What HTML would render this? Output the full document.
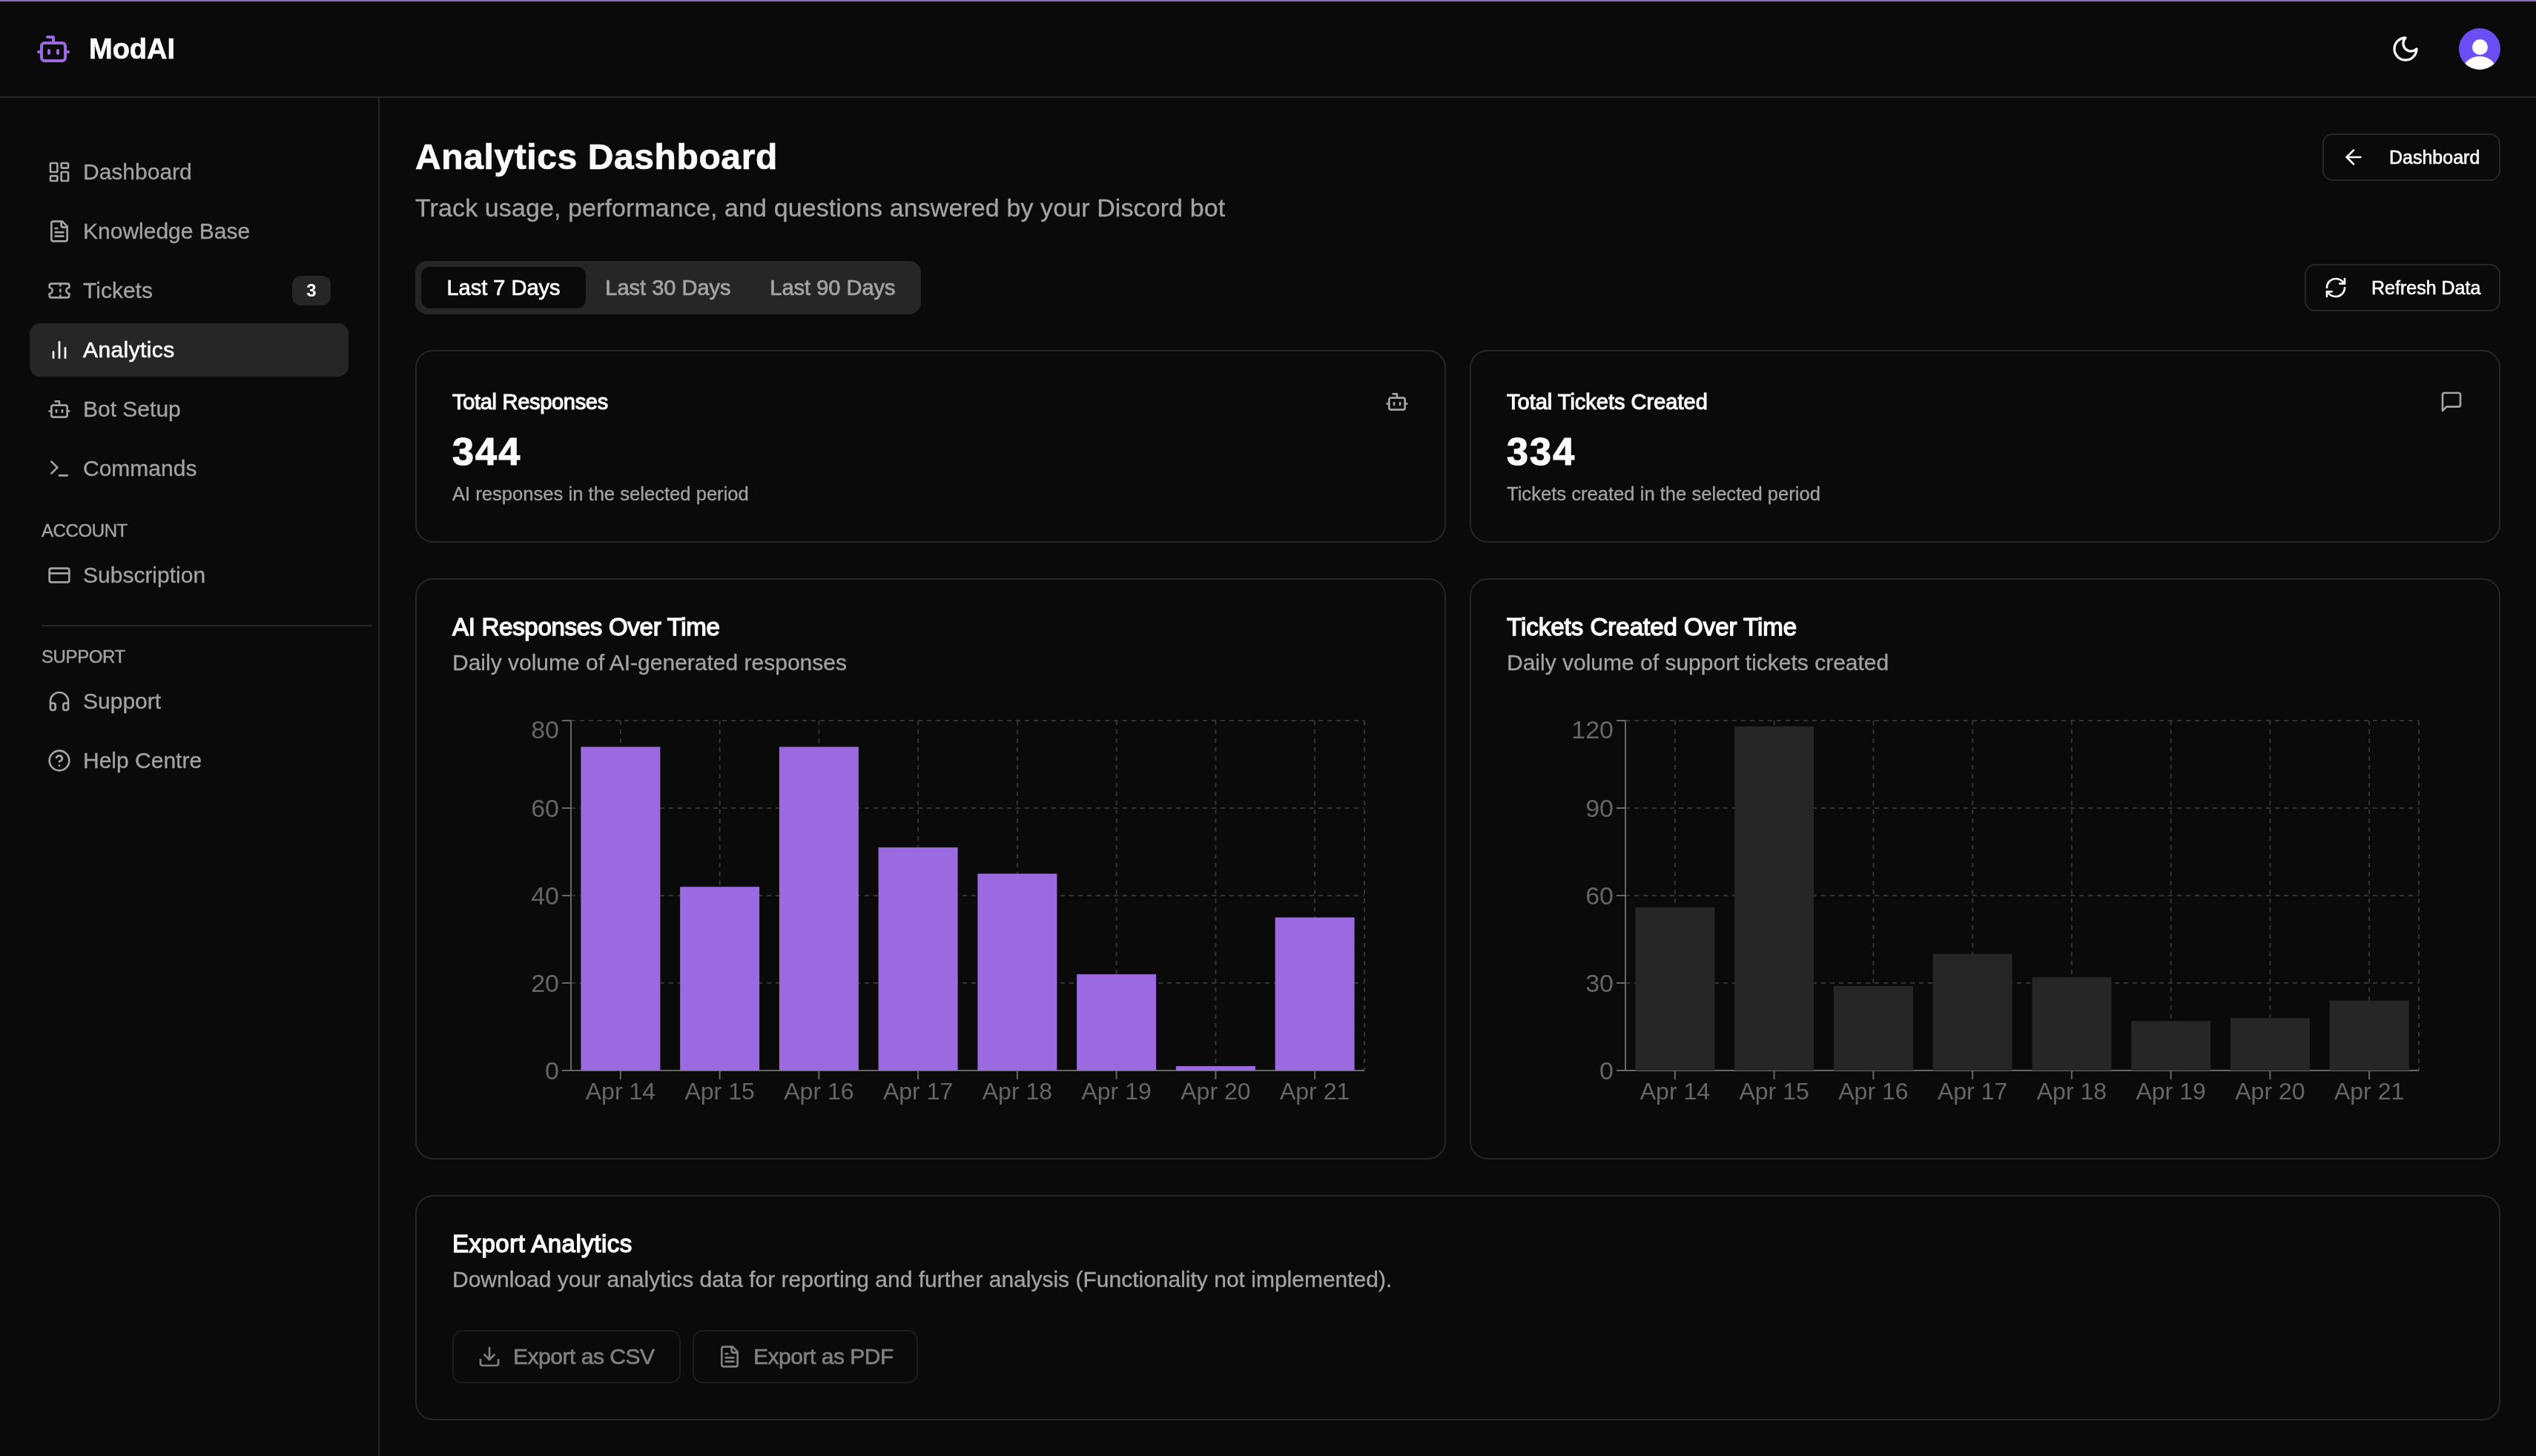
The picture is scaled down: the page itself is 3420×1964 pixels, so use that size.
<!DOCTYPE html>
<html>
<head>
<meta charset="utf-8">
<style>
*{box-sizing:border-box;margin:0;padding:0}
html,body{background:#0a0a0a;width:3420px;height:1964px;overflow:hidden}
#root{zoom:2;will-change:transform;width:1710px;height:982px;position:relative;background:#0a0a0a;color:#fafafa;font-family:"Liberation Sans",sans-serif;overflow:hidden}
@supports not (zoom:2){#root{zoom:1;transform:scale(2);transform-origin:0 0}}
.abs{position:absolute}
svg.i{position:absolute;fill:none;stroke:currentColor;stroke-width:2;stroke-linecap:round;stroke-linejoin:round}
.topline{position:absolute;left:0;top:0;width:1710px;height:1px;background:#8a6fb5}
.header{position:absolute;left:0;top:1px;width:1710px;height:65px;border-bottom:1px solid #262626}
.side{position:absolute;left:0;top:66px;width:256px;height:916px;border-right:1px solid #262626}
.nav{position:absolute;left:20px;width:215px;height:36px;border-radius:7px;color:#a3a3a3;font-size:15px}
.nav .t{position:absolute;left:36px;top:0;line-height:36px;white-space:nowrap;-webkit-text-stroke:0.15px currentColor}
.nav svg{left:12px;top:10px;width:16px;height:16px}
.nav.act{background:#262626;color:#fafafa}
.sec{position:absolute;left:28px;font-size:12px;color:#a3a3a3;-webkit-text-stroke:0.2px #a3a3a3;letter-spacing:-0.2px}
.card{position:absolute;border:1px solid #262626;border-radius:12px;background:#0a0a0a}
.btn{position:absolute;border:1px solid #262626;border-radius:7px;background:#0a0a0a;color:#fafafa;font-size:12.5px;-webkit-text-stroke:0.3px #fafafa}
.btn .t{position:absolute;white-space:nowrap}
</style>
</head>
<body>
<div id="root">
<div class="topline"></div>
<div class="header">
  <svg class="i" style="left:24px;top:20px;width:24px;height:24px;color:#9b6ae0" viewBox="0 0 24 24"><path d="M12 8V4H8"/><rect width="16" height="12" x="4" y="8" rx="2"/><path d="M2 14h2"/><path d="M20 14h2"/><path d="M15 13v2"/><path d="M9 13v2"/></svg>
  <div class="abs" style="left:60px;top:18px;font-size:19px;font-weight:bold;line-height:28px;-webkit-text-stroke:0.3px #fafafa">ModAI</div>
  <svg class="i" style="left:1612px;top:22px;width:20px;height:20px;color:#fafafa" viewBox="0 0 24 24"><path d="M12 3a6 6 0 0 0 9 9 9 9 0 1 1-9-9Z"/></svg>
  <div class="abs" style="left:1658px;top:18px;width:28px;height:28px;border-radius:50%;background:#6b4ef5;overflow:hidden">
    <div class="abs" style="left:8.75px;top:7.35px;width:10.5px;height:10.6px;border-radius:50%;background:#fff"></div>
    <div class="abs" style="left:3px;top:19.1px;width:22px;height:18px;border-radius:50%;background:#fff"></div>
  </div>
</div>
<div class="side"></div>
<!-- sidebar -->
<div class="nav" style="top:98px"><svg class="i" viewBox="0 0 24 24"><rect width="7" height="9" x="3" y="3" rx="1"/><rect width="7" height="5" x="14" y="3" rx="1"/><rect width="7" height="9" x="14" y="12" rx="1"/><rect width="7" height="5" x="3" y="16" rx="1"/></svg><span class="t">Dashboard</span></div>
<div class="nav" style="top:138px"><svg class="i" viewBox="0 0 24 24"><path d="M15 2H6a2 2 0 0 0-2 2v16a2 2 0 0 0 2 2h12a2 2 0 0 0 2-2V7Z"/><path d="M14 2v4a2 2 0 0 0 2 2h4"/><path d="M10 9H8"/><path d="M16 13H8"/><path d="M16 17H8"/></svg><span class="t">Knowledge Base</span></div>
<div class="nav" style="top:178px"><svg class="i" viewBox="0 0 24 24"><path d="M2 9a3 3 0 0 1 0 6v2a2 2 0 0 0 2 2h16a2 2 0 0 0 2-2v-2a3 3 0 0 1 0-6V7a2 2 0 0 0-2-2H4a2 2 0 0 0-2 2Z"/><path d="M13 5v2"/><path d="M13 17v2"/><path d="M13 11v2"/></svg><span class="t">Tickets</span><div class="abs" style="left:177px;top:8px;width:26px;height:20px;border-radius:6px;background:#262626;color:#fafafa;font-size:12px;font-weight:bold;text-align:center;line-height:20px">3</div></div>
<div class="nav act" style="top:218px"><svg class="i" viewBox="0 0 24 24"><line x1="18" x2="18" y1="20" y2="10"/><line x1="12" x2="12" y1="20" y2="4"/><line x1="6" x2="6" y1="20" y2="14"/></svg><span class="t" style="-webkit-text-stroke:0.3px #fafafa;letter-spacing:0.2px">Analytics</span></div>
<div class="nav" style="top:258px"><svg class="i" viewBox="0 0 24 24"><path d="M12 8V4H8"/><rect width="16" height="12" x="4" y="8" rx="2"/><path d="M2 14h2"/><path d="M20 14h2"/><path d="M15 13v2"/><path d="M9 13v2"/></svg><span class="t">Bot Setup</span></div>
<div class="nav" style="top:298px"><svg class="i" viewBox="0 0 24 24"><polyline points="4 17 10 11 4 5"/><line x1="12" x2="20" y1="19" y2="19"/></svg><span class="t">Commands</span></div>
<div class="sec" style="top:350px;line-height:16px">ACCOUNT</div>
<div class="nav" style="top:370px"><svg class="i" viewBox="0 0 24 24"><rect width="20" height="14" x="2" y="5" rx="2"/><line x1="2" x2="22" y1="10" y2="10"/></svg><span class="t">Subscription</span></div>
<div class="abs" style="left:28px;top:421.5px;width:223px;height:1px;background:#262626"></div>
<div class="sec" style="top:435px;line-height:16px">SUPPORT</div>
<div class="nav" style="top:455px"><svg class="i" viewBox="0 0 24 24"><path d="M3 14h3a2 2 0 0 1 2 2v3a2 2 0 0 1-2 2H5a2 2 0 0 1-2-2v-7a9 9 0 0 1 18 0v7a2 2 0 0 1-2 2h-1a2 2 0 0 1-2-2v-3a2 2 0 0 1 2-2h3"/></svg><span class="t">Support</span></div>
<div class="nav" style="top:495px"><svg class="i" viewBox="0 0 24 24"><circle cx="12" cy="12" r="10"/><path d="M9.09 9a3 3 0 0 1 5.83 1c0 2-3 3-3 3"/><path d="M12 17h.01"/></svg><span class="t">Help Centre</span></div>


<!-- main -->
<div class="abs" id="h1" style="left:280px;top:90px;font-size:24px;font-weight:bold;line-height:32px;white-space:nowrap;letter-spacing:0.3px;-webkit-text-stroke:0.35px #fafafa">Analytics Dashboard</div>
<div class="abs" id="sub" style="left:280px;top:128px;font-size:17px;line-height:24px;color:#a3a3a3;white-space:nowrap;-webkit-text-stroke:0.15px #a3a3a3;letter-spacing:0.05px">Track usage, performance, and questions answered by your Discord bot</div>
<div class="btn" style="left:1566px;top:90px;width:120px;height:32px"><svg class="i" style="left:12px;top:7px;width:16px;height:16px" viewBox="0 0 24 24"><path d="m12 19-7-7 7-7"/><path d="M19 12H5"/></svg><span class="t" style="left:44px;top:0;line-height:30px">Dashboard</span></div>
<div class="abs" style="left:280px;top:176px;width:341px;height:36px;border-radius:8px;background:#262626">
  <div class="abs" style="left:4px;top:4px;width:111px;height:28px;border-radius:6px;background:#0a0a0a"></div>
  <div class="abs" style="left:4px;top:4px;width:111px;line-height:28px;text-align:center;font-size:14.5px;-webkit-text-stroke:0.35px #fafafa;color:#fafafa">Last 7 Days</div>
  <div class="abs" style="left:115px;top:4px;width:111px;line-height:28px;text-align:center;font-size:14.5px;-webkit-text-stroke:0.35px #a3a3a3;color:#a3a3a3">Last 30 Days</div>
  <div class="abs" style="left:226px;top:4px;width:111px;line-height:28px;text-align:center;font-size:14.5px;-webkit-text-stroke:0.35px #a3a3a3;color:#a3a3a3">Last 90 Days</div>
</div>
<div class="btn" style="left:1554px;top:178px;width:132px;height:32px"><svg class="i" style="left:12px;top:7px;width:16px;height:16px" viewBox="0 0 24 24"><path d="M3 12a9 9 0 0 1 9-9 9.75 9.75 0 0 1 6.74 2.74L21 8"/><path d="M21 3v5h-5"/><path d="M21 12a9 9 0 0 1-9 9 9.75 9.75 0 0 1-6.74-2.74L3 16"/><path d="M8 16H3v5"/></svg><span class="t" style="left:44px;top:0;line-height:30px">Refresh Data</span></div>

<!-- stat cards -->
<div class="card" style="left:280px;top:236px;width:695px;height:130px">
  <div class="abs" style="left:24px;top:24px;font-size:14.5px;line-height:20px;-webkit-text-stroke:0.55px #fafafa;white-space:nowrap;letter-spacing:-0.15px">Total Responses</div>
  <svg class="i" style="left:653px;top:26px;width:16px;height:16px;color:#a3a3a3" viewBox="0 0 24 24"><path d="M12 8V4H8"/><rect width="16" height="12" x="4" y="8" rx="2"/><path d="M2 14h2"/><path d="M20 14h2"/><path d="M15 13v2"/><path d="M9 13v2"/></svg>
  <div class="abs" style="left:24px;top:51.5px;font-size:26px;line-height:32px;font-weight:bold;letter-spacing:1.1px;-webkit-text-stroke:0.6px #fafafa">344</div>
  <div class="abs" style="left:24px;top:88px;font-size:12.8px;line-height:16px;color:#a3a3a3;white-space:nowrap;-webkit-text-stroke:0.15px #a3a3a3">AI responses in the selected period</div>
</div>
<div class="card" style="left:991px;top:236px;width:695px;height:130px">
  <div class="abs" style="left:24px;top:24px;font-size:14.5px;line-height:20px;-webkit-text-stroke:0.55px #fafafa;white-space:nowrap">Total Tickets Created</div>
  <svg class="i" style="left:653px;top:26px;width:16px;height:16px;color:#a3a3a3" viewBox="0 0 24 24"><path d="M21 15a2 2 0 0 1-2 2H7l-4 4V5a2 2 0 0 1 2-2h14a2 2 0 0 1 2 2z"/></svg>
  <div class="abs" style="left:24px;top:51.5px;font-size:26px;line-height:32px;font-weight:bold;letter-spacing:1.1px;-webkit-text-stroke:0.6px #fafafa">334</div>
  <div class="abs" style="left:24px;top:88px;font-size:12.8px;line-height:16px;color:#a3a3a3;white-space:nowrap;-webkit-text-stroke:0.15px #a3a3a3">Tickets created in the selected period</div>
</div>

<!-- chart cards -->
<div class="card" style="left:280px;top:390px;width:695px;height:392px">
  <div class="abs" style="left:24px;top:24px;font-size:16.5px;line-height:16px;-webkit-text-stroke:0.7px #fafafa;white-space:nowrap;letter-spacing:-0.14px">AI Responses Over Time</div>
  <div class="abs" style="left:24px;top:46px;font-size:15px;line-height:20px;color:#a3a3a3;white-space:nowrap;-webkit-text-stroke:0.15px #a3a3a3">Daily volume of AI-generated responses</div>
  <svg class="abs" id="chart1" style="left:24px;top:90px;width:645px;height:276px" viewBox="0 0 645 276">
<line x1="80" x2="615" y1="241.00" y2="241.00" stroke="#333333" stroke-dasharray="3 3"/>
<line x1="80" x2="615" y1="182.00" y2="182.00" stroke="#333333" stroke-dasharray="3 3"/>
<line x1="80" x2="615" y1="123.00" y2="123.00" stroke="#333333" stroke-dasharray="3 3"/>
<line x1="80" x2="615" y1="64.00" y2="64.00" stroke="#333333" stroke-dasharray="3 3"/>
<line x1="80" x2="615" y1="5.00" y2="5.00" stroke="#333333" stroke-dasharray="3 3"/>
<line x1="113.44" x2="113.44" y1="5" y2="241" stroke="#333333" stroke-dasharray="3 3"/>
<line x1="180.31" x2="180.31" y1="5" y2="241" stroke="#333333" stroke-dasharray="3 3"/>
<line x1="247.19" x2="247.19" y1="5" y2="241" stroke="#333333" stroke-dasharray="3 3"/>
<line x1="314.06" x2="314.06" y1="5" y2="241" stroke="#333333" stroke-dasharray="3 3"/>
<line x1="380.94" x2="380.94" y1="5" y2="241" stroke="#333333" stroke-dasharray="3 3"/>
<line x1="447.81" x2="447.81" y1="5" y2="241" stroke="#333333" stroke-dasharray="3 3"/>
<line x1="514.69" x2="514.69" y1="5" y2="241" stroke="#333333" stroke-dasharray="3 3"/>
<line x1="581.56" x2="581.56" y1="5" y2="241" stroke="#333333" stroke-dasharray="3 3"/>
<line x1="615" x2="615" y1="5" y2="241" stroke="#333333" stroke-dasharray="3 3"/>
<line x1="80" x2="615" y1="241" y2="241" stroke="#666666"/>
<line x1="80" x2="80" y1="5" y2="241" stroke="#666666"/>
<line x1="74" x2="80" y1="241.00" y2="241.00" stroke="#666666"/>
<text x="72" y="241.00" dy="0.355em" text-anchor="end" fill="#666666" font-size="17">0</text>
<line x1="74" x2="80" y1="182.00" y2="182.00" stroke="#666666"/>
<text x="72" y="182.00" dy="0.355em" text-anchor="end" fill="#666666" font-size="17">20</text>
<line x1="74" x2="80" y1="123.00" y2="123.00" stroke="#666666"/>
<text x="72" y="123.00" dy="0.355em" text-anchor="end" fill="#666666" font-size="17">40</text>
<line x1="74" x2="80" y1="64.00" y2="64.00" stroke="#666666"/>
<text x="72" y="64.00" dy="0.355em" text-anchor="end" fill="#666666" font-size="17">60</text>
<line x1="74" x2="80" y1="5.00" y2="5.00" stroke="#666666"/>
<text x="72" y="11.00" dy="0.355em" text-anchor="end" fill="#666666" font-size="17">80</text>
<rect x="86.69" y="22.70" width="53.50" height="218.30" fill="#9b69e0"/>
<rect x="153.56" y="117.10" width="53.50" height="123.90" fill="#9b69e0"/>
<rect x="220.44" y="22.70" width="53.50" height="218.30" fill="#9b69e0"/>
<rect x="287.31" y="90.55" width="53.50" height="150.45" fill="#9b69e0"/>
<rect x="354.19" y="108.25" width="53.50" height="132.75" fill="#9b69e0"/>
<rect x="421.06" y="176.10" width="53.50" height="64.90" fill="#9b69e0"/>
<rect x="487.94" y="238.05" width="53.50" height="2.95" fill="#9b69e0"/>
<rect x="554.81" y="137.75" width="53.50" height="103.25" fill="#9b69e0"/>
<line x1="113.44" x2="113.44" y1="241" y2="247" stroke="#666666"/>
<text x="113.44" y="249" dy="0.71em" text-anchor="middle" fill="#666666" font-size="16">Apr 14</text>
<line x1="180.31" x2="180.31" y1="241" y2="247" stroke="#666666"/>
<text x="180.31" y="249" dy="0.71em" text-anchor="middle" fill="#666666" font-size="16">Apr 15</text>
<line x1="247.19" x2="247.19" y1="241" y2="247" stroke="#666666"/>
<text x="247.19" y="249" dy="0.71em" text-anchor="middle" fill="#666666" font-size="16">Apr 16</text>
<line x1="314.06" x2="314.06" y1="241" y2="247" stroke="#666666"/>
<text x="314.06" y="249" dy="0.71em" text-anchor="middle" fill="#666666" font-size="16">Apr 17</text>
<line x1="380.94" x2="380.94" y1="241" y2="247" stroke="#666666"/>
<text x="380.94" y="249" dy="0.71em" text-anchor="middle" fill="#666666" font-size="16">Apr 18</text>
<line x1="447.81" x2="447.81" y1="241" y2="247" stroke="#666666"/>
<text x="447.81" y="249" dy="0.71em" text-anchor="middle" fill="#666666" font-size="16">Apr 19</text>
<line x1="514.69" x2="514.69" y1="241" y2="247" stroke="#666666"/>
<text x="514.69" y="249" dy="0.71em" text-anchor="middle" fill="#666666" font-size="16">Apr 20</text>
<line x1="581.56" x2="581.56" y1="241" y2="247" stroke="#666666"/>
<text x="581.56" y="249" dy="0.71em" text-anchor="middle" fill="#666666" font-size="16">Apr 21</text>
</svg>
</div>
<div class="card" style="left:991px;top:390px;width:695px;height:392px">
  <div class="abs" style="left:24px;top:24px;font-size:16.5px;line-height:16px;-webkit-text-stroke:0.7px #fafafa;white-space:nowrap">Tickets Created Over Time</div>
  <div class="abs" style="left:24px;top:46px;font-size:15px;line-height:20px;color:#a3a3a3;white-space:nowrap;-webkit-text-stroke:0.15px #a3a3a3">Daily volume of support tickets created</div>
  <svg class="abs" id="chart2" style="left:24px;top:90px;width:645px;height:276px" viewBox="0 0 645 276">
<line x1="80" x2="615" y1="241.00" y2="241.00" stroke="#333333" stroke-dasharray="3 3"/>
<line x1="80" x2="615" y1="182.00" y2="182.00" stroke="#333333" stroke-dasharray="3 3"/>
<line x1="80" x2="615" y1="123.00" y2="123.00" stroke="#333333" stroke-dasharray="3 3"/>
<line x1="80" x2="615" y1="64.00" y2="64.00" stroke="#333333" stroke-dasharray="3 3"/>
<line x1="80" x2="615" y1="5.00" y2="5.00" stroke="#333333" stroke-dasharray="3 3"/>
<line x1="113.44" x2="113.44" y1="5" y2="241" stroke="#333333" stroke-dasharray="3 3"/>
<line x1="180.31" x2="180.31" y1="5" y2="241" stroke="#333333" stroke-dasharray="3 3"/>
<line x1="247.19" x2="247.19" y1="5" y2="241" stroke="#333333" stroke-dasharray="3 3"/>
<line x1="314.06" x2="314.06" y1="5" y2="241" stroke="#333333" stroke-dasharray="3 3"/>
<line x1="380.94" x2="380.94" y1="5" y2="241" stroke="#333333" stroke-dasharray="3 3"/>
<line x1="447.81" x2="447.81" y1="5" y2="241" stroke="#333333" stroke-dasharray="3 3"/>
<line x1="514.69" x2="514.69" y1="5" y2="241" stroke="#333333" stroke-dasharray="3 3"/>
<line x1="581.56" x2="581.56" y1="5" y2="241" stroke="#333333" stroke-dasharray="3 3"/>
<line x1="615" x2="615" y1="5" y2="241" stroke="#333333" stroke-dasharray="3 3"/>
<line x1="80" x2="615" y1="241" y2="241" stroke="#666666"/>
<line x1="80" x2="80" y1="5" y2="241" stroke="#666666"/>
<line x1="74" x2="80" y1="241.00" y2="241.00" stroke="#666666"/>
<text x="72" y="241.00" dy="0.355em" text-anchor="end" fill="#666666" font-size="17">0</text>
<line x1="74" x2="80" y1="182.00" y2="182.00" stroke="#666666"/>
<text x="72" y="182.00" dy="0.355em" text-anchor="end" fill="#666666" font-size="17">30</text>
<line x1="74" x2="80" y1="123.00" y2="123.00" stroke="#666666"/>
<text x="72" y="123.00" dy="0.355em" text-anchor="end" fill="#666666" font-size="17">60</text>
<line x1="74" x2="80" y1="64.00" y2="64.00" stroke="#666666"/>
<text x="72" y="64.00" dy="0.355em" text-anchor="end" fill="#666666" font-size="17">90</text>
<line x1="74" x2="80" y1="5.00" y2="5.00" stroke="#666666"/>
<text x="72" y="11.00" dy="0.355em" text-anchor="end" fill="#666666" font-size="17">120</text>
<rect x="86.69" y="130.87" width="53.50" height="110.13" fill="#262626"/>
<rect x="153.56" y="8.93" width="53.50" height="232.07" fill="#262626"/>
<rect x="220.44" y="183.97" width="53.50" height="57.03" fill="#262626"/>
<rect x="287.31" y="162.33" width="53.50" height="78.67" fill="#262626"/>
<rect x="354.19" y="178.07" width="53.50" height="62.93" fill="#262626"/>
<rect x="421.06" y="207.57" width="53.50" height="33.43" fill="#262626"/>
<rect x="487.94" y="205.60" width="53.50" height="35.40" fill="#262626"/>
<rect x="554.81" y="193.80" width="53.50" height="47.20" fill="#262626"/>
<line x1="113.44" x2="113.44" y1="241" y2="247" stroke="#666666"/>
<text x="113.44" y="249" dy="0.71em" text-anchor="middle" fill="#666666" font-size="16">Apr 14</text>
<line x1="180.31" x2="180.31" y1="241" y2="247" stroke="#666666"/>
<text x="180.31" y="249" dy="0.71em" text-anchor="middle" fill="#666666" font-size="16">Apr 15</text>
<line x1="247.19" x2="247.19" y1="241" y2="247" stroke="#666666"/>
<text x="247.19" y="249" dy="0.71em" text-anchor="middle" fill="#666666" font-size="16">Apr 16</text>
<line x1="314.06" x2="314.06" y1="241" y2="247" stroke="#666666"/>
<text x="314.06" y="249" dy="0.71em" text-anchor="middle" fill="#666666" font-size="16">Apr 17</text>
<line x1="380.94" x2="380.94" y1="241" y2="247" stroke="#666666"/>
<text x="380.94" y="249" dy="0.71em" text-anchor="middle" fill="#666666" font-size="16">Apr 18</text>
<line x1="447.81" x2="447.81" y1="241" y2="247" stroke="#666666"/>
<text x="447.81" y="249" dy="0.71em" text-anchor="middle" fill="#666666" font-size="16">Apr 19</text>
<line x1="514.69" x2="514.69" y1="241" y2="247" stroke="#666666"/>
<text x="514.69" y="249" dy="0.71em" text-anchor="middle" fill="#666666" font-size="16">Apr 20</text>
<line x1="581.56" x2="581.56" y1="241" y2="247" stroke="#666666"/>
<text x="581.56" y="249" dy="0.71em" text-anchor="middle" fill="#666666" font-size="16">Apr 21</text>
</svg>
</div>

<!-- export card -->
<div class="card" style="left:280px;top:806px;width:1406px;height:152px">
  <div class="abs" style="left:24px;top:24px;font-size:16.5px;line-height:16px;-webkit-text-stroke:0.7px #fafafa;white-space:nowrap;letter-spacing:0.25px">Export Analytics</div>
  <div class="abs" style="left:24px;top:46px;font-size:15px;line-height:20px;color:#a3a3a3;white-space:nowrap;-webkit-text-stroke:0.15px #a3a3a3">Download your analytics data for reporting and further analysis (Functionality not implemented).</div>
  <div class="abs" style="left:24px;top:90px;width:154px;height:36px;border:1px solid #1c1c1c;border-radius:7px;color:#808080;font-size:15px;-webkit-text-stroke:0.3px #808080;letter-spacing:-0.24px">
    <svg class="i" style="left:16px;top:9px;width:16px;height:16px" viewBox="0 0 24 24"><path d="M21 15v4a2 2 0 0 1-2 2H5a2 2 0 0 1-2-2v-4"/><polyline points="7 10 12 15 17 10"/><line x1="12" x2="12" y1="15" y2="3"/></svg>
    <span class="abs" style="left:40px;top:0;line-height:34px;white-space:nowrap">Export as CSV</span>
  </div>
  <div class="abs" style="left:186px;top:90px;width:152px;height:36px;border:1px solid #1c1c1c;border-radius:7px;color:#808080;font-size:15px;-webkit-text-stroke:0.3px #808080;letter-spacing:-0.24px">
    <svg class="i" style="left:16px;top:9px;width:16px;height:16px" viewBox="0 0 24 24"><path d="M15 2H6a2 2 0 0 0-2 2v16a2 2 0 0 0 2 2h12a2 2 0 0 0 2-2V7Z"/><path d="M14 2v4a2 2 0 0 0 2 2h4"/><path d="M10 9H8"/><path d="M16 13H8"/><path d="M16 17H8"/></svg>
    <span class="abs" style="left:40px;top:0;line-height:34px;white-space:nowrap">Export as PDF</span>
  </div>
</div>
</div>
</body>
</html>
